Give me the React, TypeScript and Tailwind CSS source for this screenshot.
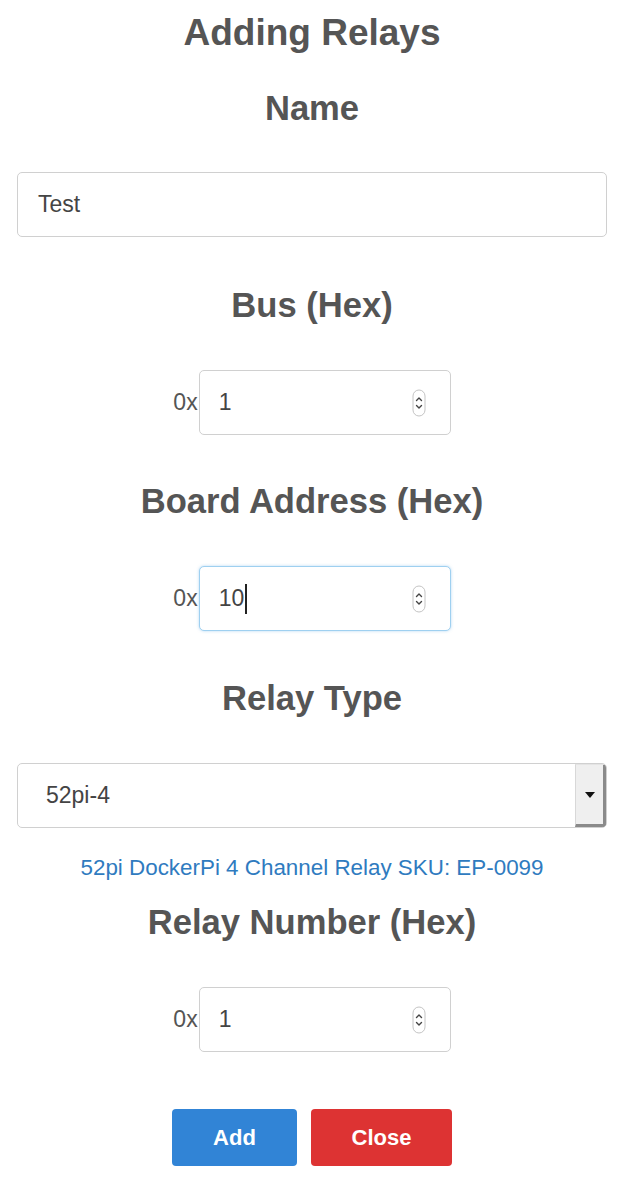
const FONT = { fontFamily: '"Liberation Sans", Arial, Helvetica, sans-serif' };

function Heading({ children, className = "" }: { children: React.ReactNode; className?: string }) {
    return (
        <h4 className={`text-[34.6px] leading-[42px] font-bold text-[#555] text-center ${className}`}>
            {children}
        </h4>
    );
}

function Spinner() {
    return (
        <svg width="14" height="28" viewBox="0 0 14 28" className="shrink-0">
            <rect x="1" y="1" width="12" height="26" rx="6" fill="#fff" stroke="#c4c4c4" strokeWidth="1" />
            <path d="M4.5 11.5 L7 9 L9.5 11.5" fill="none" stroke="#444" strokeWidth="1.4" strokeLinecap="round" strokeLinejoin="round" />
            <path d="M4.5 16.5 L7 19 L9.5 16.5" fill="none" stroke="#444" strokeWidth="1.4" strokeLinecap="round" strokeLinejoin="round" />
        </svg>
    );
}

function HexInput({ value, focused = false }: { value: string; focused?: boolean }) {
    return (
        <div className="mt-[44px] flex items-center">
            <span className="text-[23px] text-[#555] mr-px">0x</span>
            <div
                className={`w-[252px] h-[65px] rounded-[5px] border flex items-center pl-[19px] pr-[24px] bg-white ${
                    focused
                        ? "border-[#9fd0f0] shadow-[0_0_3px_rgba(102,175,233,0.5)]"
                        : "border-[#d0d0d0]"
                }`}
            >
                <span className="flex-1 flex items-center text-[23px] text-[#444]">
                    {value}
                    {focused && <span className="inline-block w-[2px] h-[30px] bg-[#222] ml-px" />}
                </span>
                <Spinner />
            </div>
        </div>
    );
}

export default function App() {
    return (
        <div style={FONT} className="w-[624px] min-h-[1194px] bg-white flex flex-col items-center px-[17px] pt-[11px]">
            <h3 className="text-[37px] leading-[44px] font-bold text-[#555] text-center">Adding Relays</h3>

            <Heading className="mt-[32px]">Name</Heading>
            <div className="mt-[43px] w-full h-[65px] rounded-[5px] border border-[#d0d0d0] flex items-center px-[20px]">
                <span className="text-[23px] text-[#444]">Test</span>
            </div>

            <Heading className="mt-[47px]">Bus (Hex)</Heading>
            <HexInput value="1" />

            <Heading className="mt-[45px]">Board Address (Hex)</Heading>
            <HexInput value="10" focused />

            <Heading className="mt-[46px]">Relay Type</Heading>
            <div className="mt-[44px] w-full h-[65px] rounded-[5px] border border-[#d0d0d0] flex items-stretch overflow-hidden">
                <span className="flex-1 flex items-center pl-[28px] text-[23px] text-[#444]">52pi-4</span>
                <div className="w-[31px] bg-[#efefef] border-l border-l-[#d8d8d8] border-t border-t-[#e4e4e4] border-r-[3px] border-r-[#8a8a8a] border-b-[3px] border-b-[#8a8a8a] flex items-center justify-center">
                    <svg width="10" height="6" viewBox="0 0 10 6">
                        <path d="M0 0 H10 L5 6 Z" fill="#111" />
                    </svg>
                </div>
            </div>

            <p className="mt-[25px] text-[22.4px] leading-[30px] text-[#2f7bbf] text-center">
                52pi DockerPi 4 Channel Relay SKU: EP-0099
            </p>

            <Heading className="mt-[18px]">Relay Number (Hex)</Heading>
            <HexInput value="1" />

            <div className="mt-[57px] flex gap-[14px]">
                <button className="w-[125px] h-[57px] rounded-[4px] bg-[#3184d6] text-white font-bold text-[22px]">
                    Add
                </button>
                <button className="w-[141px] h-[57px] rounded-[4px] bg-[#dd3333] text-white font-bold text-[22px]">
                    Close
                </button>
            </div>
        </div>
    );
}
